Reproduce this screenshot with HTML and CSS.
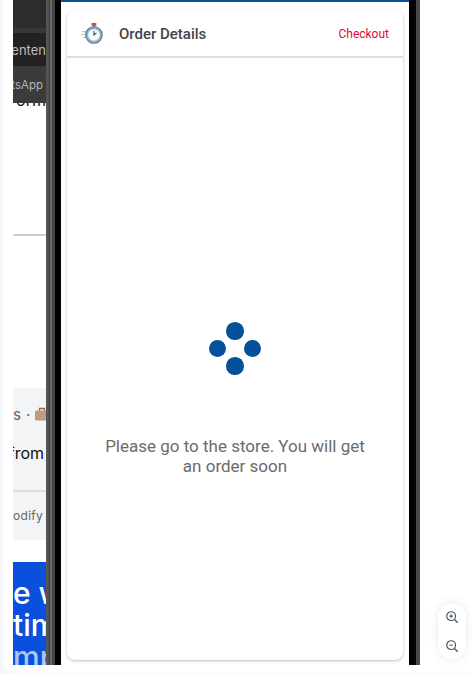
FILE: index.html
```html
<!DOCTYPE html>
<html lang="en">
<head>
<meta charset="utf-8">
<title>Order Details</title>
<link rel="stylesheet" href="styles.css">
</head>
<body>
<div class="page">
  <div class="sheet">
    <div class="row">
      <aside class="behind">
        <div class="dark">
          <div class="dark-top"></div>
          <div class="dark-row dark-a"><span>Presenten</span></div>
          <div class="dark-row dark-b"><span>WhatsApp</span></div>
        </div>
        <div class="white-a">
          <div class="form-text"><span>Form</span></div>
          <div class="rule"></div>
        </div>
        <div class="chat">
          <div class="chat-meta"><span>s</span><span class="dot">·</span><svg class="case" viewBox="0 0 14 14"><rect x="0" y="3.5" width="14" height="10" rx="1.5" fill="#c09a80"/><path d="M4.5 3.5V1.5h5v2" fill="none" stroke="#8a6a50" stroke-width="1.3"/></svg></div>
          <div class="chat-from"><span>from</span></div>
          <div class="chat-foot"><span>odify</span></div>
        </div>
        <div class="promo">
          <div class="promo-1">e w</div>
          <div class="promo-2">tim</div>
          <div class="promo-3">mp</div>
        </div>
      </aside>
      <div class="frame-left"><i></i><i></i><i></i><i></i></div>
      <main class="screen">
        <div class="topbar"></div>
        <section class="card">
          <header class="card-head">
            <svg class="timer" viewBox="0 0 24 24">
              <rect x="11" y="1" width="5" height="3" fill="#d8474c"/>
              <rect x="12.5" y="3.5" width="2" height="2" fill="#5c7080"/>
              <path d="M1 10h4M0 13h4M2 16h3" stroke="#b7c2c9" stroke-width="1.2"/>
              <circle cx="13.5" cy="13.5" r="8.6" fill="#8fb6cf" stroke="#4f6b7e" stroke-width="1.1"/>
              <circle cx="13.5" cy="13.5" r="6" fill="#fafafa"/>
              <path d="M13.5 9.5v4l2.6-2" fill="none" stroke="#3c4a55" stroke-width="1.1"/>
            </svg>
            <h1 class="title">Order Details</h1>
            <a class="checkout">Checkout</a>
          </header>
          <div class="card-body">
            <div class="spinner"><b></b><b></b><b></b><b></b></div>
            <p class="message">Please go to the store. You will get an order soon</p>
          </div>
        </section>
      </main>
      <div class="frame-right"></div>
      <div class="side">
        <div class="zoom-pill">
          <svg class="zoom-icon" viewBox="0 0 16 16"><circle cx="7" cy="7" r="5" fill="none" stroke="#4c5b68" stroke-width="1.4"/><path d="M10.8 10.8L14.5 14.5" stroke="#4c5b68" stroke-width="1.6"/><path d="M4.8 7h4.4M7 4.8v4.4" stroke="#4c5b68" stroke-width="1.2"/></svg>
          <svg class="zoom-icon" viewBox="0 0 16 16"><circle cx="7" cy="7" r="5" fill="none" stroke="#4c5b68" stroke-width="1.4"/><path d="M10.8 10.8L14.5 14.5" stroke="#4c5b68" stroke-width="1.6"/><path d="M4.8 7h4.4" stroke="#4c5b68" stroke-width="1.2"/></svg>
        </div>
      </div>
    </div>
  </div>
</div>
</body>
</html>
```

FILE: styles.css
```css
* { box-sizing: border-box; }
html, body { margin: 0; padding: 0; }
body { width: 472px; height: 674px; overflow: hidden; background: #f5f7fc; font-family: Roboto, sans-serif; }
.page { height: 674px; padding-left: 3px; }
.sheet { height: 673px; background: #fff; border-bottom-left-radius: 10px; }
.row { display: flex; height: 665px; }
.behind { width: 43px; flex: none; padding-left: 10px; display: flex; flex-direction: column; font-family: Inter, sans-serif; overflow: hidden; }
.dark { height: 103px; flex: none; background: #2b2b2b; display: flex; flex-direction: column; }
.dark-top { height: 33px; background: linear-gradient(#2d2d2d 28px, #383838 28px); }
.dark-row { display: flex; justify-content: flex-end; align-items: center; white-space: nowrap; overflow: hidden; }
.dark-a { height: 33px; background: #222; color: #bdbdbd; font-size: 13px; }
.dark-b { height: 37px; background: #3b3b3b; color: #b4b4b4; font-size: 11.5px; padding-right: 3px; }
.white-a { height: 285px; flex: none; display: flex; flex-direction: column; }
.form-text { height: 5px; overflow: hidden; display: flex; justify-content: flex-end; font-size: 16px; color: #111; white-space: nowrap; }
.form-text span { margin-top: -12px; display: block; line-height: 18px; }
.rule { height: 2px; margin-top: 126px; background: #cfcfcf; }
.chat { height: 152px; flex: none; background: #f3f4f6; display: flex; flex-direction: column; }
.chat-meta { height: 52px; flex: none; display: flex; align-items: center; font-size: 15px; color: #666; white-space: nowrap; }
.dot { margin: 0 5px 0 5px; }
.case { width: 14px; height: 14px; flex: none; }
.chat-from { height: 50px; flex: none; overflow: hidden; display: flex; align-items: flex-start; justify-content: flex-end; padding: 3px 2px 0 0; font-size: 16px; color: #111; white-space: nowrap; }
.chat-foot { height: 50px; flex: none; border-top: 2px solid #dcdcdc; padding-top: 16px; font-size: 12px; letter-spacing: .3px; color: #666; white-space: nowrap; overflow: hidden; }
.promo { margin-top: 22px; height: 103px; flex: none; background: #0a50dc; color: #fff; font-size: 30px; line-height: 32px; white-space: nowrap; padding-top: 15px; overflow: hidden; font-weight: 500; }
.promo-3 { color: #a9c6f5; }
.frame-left { width: 15px; flex: none; display: flex; background: #000; }
.frame-left i { display: block; }
.frame-left i:nth-child(1) { width: 3px; background: #555; }
.frame-left i:nth-child(2) { width: 1px; background: #3a3a3a; }
.frame-left i:nth-child(3) { width: 2px; background: #6a6a6a; }
.frame-left i:nth-child(4) { width: 3px; background: #444; }
.screen { width: 348px; flex: none; background: #fff; display: flex; flex-direction: column; }
.topbar { height: 2px; flex: none; background: #05509b; }
.card { margin: 8px 6px 5px; flex: 1; min-height: 0; background: #fff; border-radius: 8px; box-shadow: 0 1px 3px rgba(0,0,0,.25); display: flex; flex-direction: column; }
.card-head { height: 48px; flex: none; display: flex; align-items: center; padding: 1px 14px 0; border-bottom: 2px solid #dfdfdf; }
.timer { width: 23px; height: 23px; flex: none; margin-right: 15px; }
.title { margin: 0; flex: 1; font-size: 15px; font-weight: 500; color: #444; }
.checkout { font-size: 12px; color: #dd0a2f; }
.card-body { flex: 1; display: flex; flex-direction: column; align-items: center; padding-top: 264px; }
.spinner { width: 52.5px; height: 52.5px; flex: none; display: grid; grid-template-columns: repeat(3, minmax(0, 1fr)); grid-template-rows: repeat(3, minmax(0, 1fr)); }
.spinner b { border-radius: 50%; background: #05509b; display: block; }
.spinner b:nth-child(1) { grid-area: 1 / 2; }
.spinner b:nth-child(2) { grid-area: 2 / 1; }
.spinner b:nth-child(3) { grid-area: 2 / 3; }
.spinner b:nth-child(4) { grid-area: 3 / 2; }
.message { margin: 61.5px 0 0; width: 270px; text-align: center; font-size: 17px; line-height: 20px; color: #6b6b6b; }
.frame-right { width: 11px; flex: none; background: linear-gradient(90deg, #000 7px, #4a4a4a 7px); }
.side { flex: 1; display: flex; flex-direction: column; justify-content: flex-end; align-items: flex-end; padding: 0 6px 6px 0; }
.zoom-pill { width: 28px; height: 56px; border-radius: 14px; background: #fff; box-shadow: 0 0 10px rgba(60,80,120,.13); display: flex; flex-direction: column; align-items: center; justify-content: center; gap: 15px; }
.zoom-icon { width: 14px; height: 14px; flex: none; }
```
